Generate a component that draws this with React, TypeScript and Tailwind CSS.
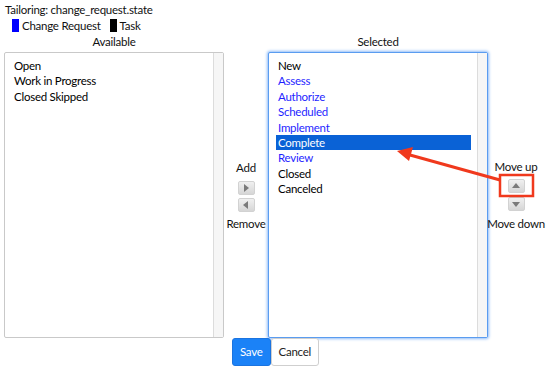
import React from "react";

type Item = { label: string; kind: "task" | "cr" };

const available: Item[] = [
  { label: "Open", kind: "task" },
  { label: "Work in Progress", kind: "task" },
  { label: "Closed Skipped", kind: "task" },
];

const selected: Item[] = [
  { label: "New", kind: "task" },
  { label: "Assess", kind: "cr" },
  { label: "Authorize", kind: "cr" },
  { label: "Scheduled", kind: "cr" },
  { label: "Implement", kind: "cr" },
  { label: "Complete", kind: "cr" },
  { label: "Review", kind: "cr" },
  { label: "Closed", kind: "task" },
  { label: "Canceled", kind: "task" },
];

const Triangle = ({ dir }: { dir: "up" | "down" | "left" | "right" }) => {
  const pts = {
    up: "1,7 5,2 9,7",
    down: "1,3 5,8 9,3",
    left: "7,1 2,5 7,9",
    right: "3,1 8,5 3,9",
  }[dir];
  return (
    <svg width="10" height="10" viewBox="0 0 10 10">
      <polygon points={pts} fill="#7a7a7a" />
    </svg>
  );
};

const SmallButton = ({ dir }: { dir: "up" | "down" | "left" | "right" }) => (
  <button className="w-[17px] h-[14px] flex items-center justify-center rounded-[2px] border border-[#d2d2d2] bg-gradient-to-b from-[#f0f0f0] to-[#d6d6d6]">
    <Triangle dir={dir} />
  </button>
);

const ListBox = ({
  items,
  focused,
  active,
}: {
  items: Item[];
  focused?: boolean;
  active?: string;
}) => (
  <div
    className={
      focused
        ? "w-[220px] h-[286px] flex bg-white rounded-[2px] border border-[#5a9cf0] shadow-[0_0_3px_1px_#8fbcf8]"
        : "w-[220px] h-[286px] flex bg-white rounded-[2px] border border-[#c9c9c9]"
    }
  >
    <div className="flex-1 flex flex-col pt-[5px] pl-[7px] pr-[6px]">
      {items.map((it) => (
        <div
          key={it.label}
          className={
            it.label === active
              ? "h-[15.4px] leading-[15.4px] pl-[2px] bg-[#0a62d6] text-white"
              : it.kind === "cr"
              ? "h-[15.4px] leading-[15.4px] pl-[2px] text-[#1f1fff]"
              : "h-[15.4px] leading-[15.4px] pl-[2px] text-black"
          }
        >
          {it.label}
        </div>
      ))}
    </div>
    <div className="w-[10px] border-l border-[#dcdcdc] bg-[#f6f6f6]" />
  </div>
);

export default function App() {
  return (
    <div
      className="relative w-[551px] h-[373px] bg-white text-[11.5px] tracking-[-0.25px] text-[#111]"
      style={{ fontFamily: "Lato, 'Noto Sans', sans-serif" }}
    >
      <div className="pl-[5px] pt-[2px] leading-[16px]">Tailoring: change_request.state</div>
      <div className="flex items-center pl-[12px] h-[15px] leading-[15px]">
        <span className="w-[7px] h-[13px] bg-[#0000ff] mr-[3px]" />
        <span>Change Request</span>
        <span className="w-[7px] h-[13px] bg-black ml-[9px] mr-[3px]" />
        <span>Task</span>
      </div>
      <div className="flex pl-[4px] mt-[1px]">
        <div className="flex flex-col">
          <div className="h-[18px] leading-[16px] text-center">Available</div>
          <ListBox items={available} />
        </div>
        <div className="w-[44px] flex flex-col items-center justify-center pt-[18px] whitespace-nowrap">
          <div className="leading-[15px]">Add</div>
          <div className="flex flex-col gap-[3px] mt-[6px] mb-[4px]">
            <SmallButton dir="right" />
            <SmallButton dir="left" />
          </div>
          <div className="leading-[15px]">Remove</div>
        </div>
        <div className="flex flex-col">
          <div className="h-[18px] leading-[16px] text-center">Selected</div>
          <ListBox items={selected} focused active="Complete" />
        </div>
        <div className="w-[56px] flex flex-col items-center justify-center pt-[18px] whitespace-nowrap">
          <div className="leading-[15px]">Move up</div>
          <div className="flex flex-col gap-[4px] mt-[5px] mb-[5px]">
            <SmallButton dir="up" />
            <SmallButton dir="down" />
          </div>
          <div className="leading-[15px]">Move down</div>
        </div>
      </div>
      <div className="flex justify-center">
        <button className="h-[28px] px-[7px] rounded-[3px] bg-[#1b82f7] text-white border border-[#1b74e0]">
          Save
        </button>
        <button className="h-[28px] px-[7px] rounded-[3px] bg-white text-[#222] border border-[#cfcfcf]">
          Cancel
        </button>
      </div>
      <svg className="absolute inset-0 pointer-events-none" width="551" height="373" viewBox="0 0 551 373">
        <line x1="500" y1="180" x2="410" y2="155" stroke="#f0391d" strokeWidth="3" />
        <polygon points="397,151 413,147 409,161" fill="#f0391d" />
        <rect x="500" y="175" width="33" height="21" fill="none" stroke="#f0391d" strokeWidth="2.5" />
      </svg>
    </div>
  );
}
